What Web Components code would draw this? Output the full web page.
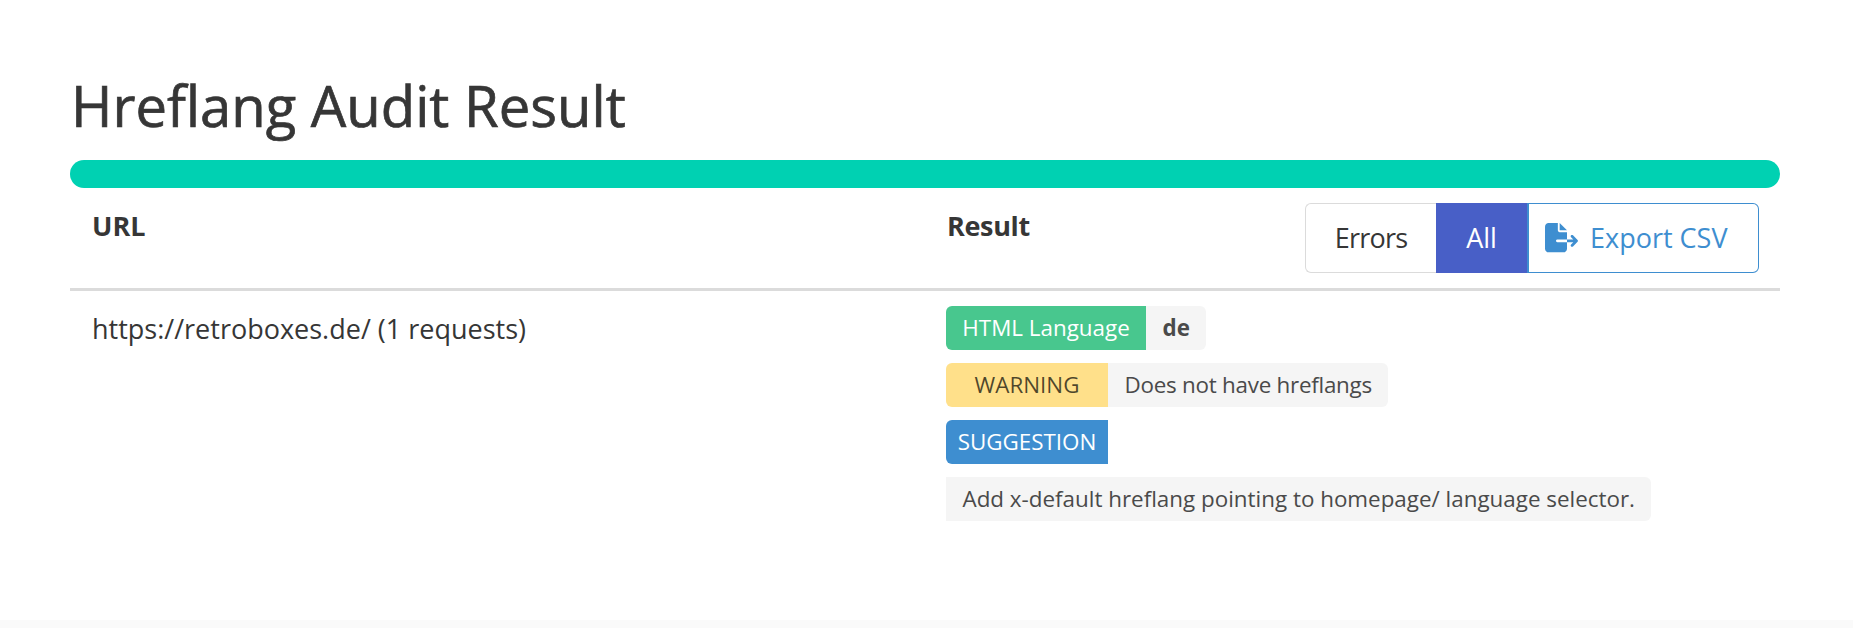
<!DOCTYPE html>
<html><head><meta charset="utf-8"><title>Hreflang Audit Result</title>
<style>
html,body{margin:0;padding:0;background:#fff}
body{font-family:"Open Sans","Noto Sans",sans-serif;color:#4a4a4a}
</style></head><body>
<template id="t-page"><style>
:host{display:block;height:628px;box-sizing:border-box;background:#fff}
main{box-sizing:border-box;height:620px;padding:71px 73px 0 70px}
h1{margin:0 0 21px;font-size:56.2px;line-height:68px;font-weight:400;-webkit-text-stroke:.7px #363636;color:#363636;padding-left:1px;white-space:nowrap}
footer{height:8px;background:#fafafa}
</style><main><h1><slot name="title"></slot></h1><slot></slot></main><footer></footer></template>

<template id="t-progress"><style>
:host{display:block;height:28px;border-radius:14px;background:#00d1b2}
</style></template>

<template id="t-table"><style>
:host{display:block;font-size:27px;color:#363636}
.head{display:grid;grid-template-columns:855px 1fr;height:103px;box-sizing:border-box;border-bottom:3px solid #dbdbdb}
.cell{padding:20px 0 0 22px;font-weight:700;line-height:36px}
.res{display:flex;justify-content:space-between;padding-right:21px}
.res>span{letter-spacing:-.35px}
.body{display:grid;grid-template-columns:855px 1fr}
.url{padding:20px 0 0 22px;line-height:36px}
.results{padding:15px 0 0 21px;display:flex;flex-direction:column;align-items:flex-start;gap:13.5px}
::slotted(btn-group){margin-top:-5px}
</style>
<div class="head"><div class="cell">URL</div><div class="cell res"><span>Result</span><slot name="actions"></slot></div></div>
<div class="body"><div class="url"><slot name="url"></slot></div><div class="results"><slot></slot></div></div></template>

<template id="t-group"><style>
:host{display:flex;height:70px;font-size:27px;font-weight:400;letter-spacing:0}
</style><slot></slot></template>

<template id="t-btn"><style>
:host{display:flex;align-items:center;justify-content:center;gap:12px;box-sizing:border-box;height:70px;border:1px solid #dbdbdb;background:#fff;color:#363636;white-space:nowrap}
:host([kind=first]){width:131px;border-radius:6px 0 0 6px;border-right:0;letter-spacing:-.8px}
:host([kind=active]){width:91px;background:#485fc7;border-color:#485fc7;color:#fff}
:host([kind=export]){width:232px;justify-content:flex-start;padding-left:16px;border:1px solid #3e8ed0;border-left-width:2px;color:#3e8ed0;border-radius:0 6px 6px 0}
</style><slot></slot></template>

<template id="t-tags"><style>
:host{display:inline-flex;height:43.5px;font-size:22.4px;line-height:43px;white-space:nowrap}
.l,.r{display:block;box-sizing:border-box}
.l{border-radius:6px 0 0 6px;text-align:center}
.r{background:#f5f5f5;color:#4a4a4a;border-radius:0 6px 6px 0;padding:0 16.5px}
:host([kind=ok]) .l{background:#48c78e;color:#fff;width:200px}
:host([kind=warn]) .l{background:#ffe08a;color:rgba(0,0,0,.7);width:162px}
:host([kind=warn]) .r{letter-spacing:-.25px}
:host([kind=info]) .l{background:#3e8ed0;color:#fff;width:162px}
:host([kind=info]) .r,:host([kind=plain]) .l{display:none}
:host([strong]) .r{font-weight:700;padding-right:16px}
</style><span class="l"><slot name="label"></slot></span><span class="r"><slot></slot></span></template>

<audit-page>
<span slot="title">Hreflang Audit Result</span>
<audit-progress></audit-progress>
<audit-table>
<btn-group slot="actions">
<audit-btn kind="first">Errors</audit-btn>
<audit-btn kind="active">All</audit-btn>
<audit-btn kind="export"><svg width="33" height="29.3" viewBox="0 0 576 512" aria-hidden="true"><path fill="#3e8ed0" d="M0 64C0 28.7 28.7 0 64 0H224V128c0 17.7 14.3 32 32 32H384V288H216c-13.3 0-24 10.7-24 24s10.7 24 24 24H384V448c0 35.3-28.7 64-64 64H64c-35.3 0-64-28.7-64-64V64zM384 336V288H494.1l-39-39c-9.4-9.4-9.4-24.6 0-33.9s24.6-9.4 33.9 0l80 80c9.4 9.4 9.4 24.6 0 33.9l-80 80c-9.4 9.4-24.6 9.4-33.9 0s-9.4-24.6 0-33.9l39-39H384zm0-208H256V0L384 128z"/></svg>Export CSV</audit-btn>
</btn-group>
<span slot="url">https://retroboxes.de/ (1 requests)</span>
<tag-pair kind="ok" strong><span slot="label">HTML Language</span>de</tag-pair>
<tag-pair kind="warn"><span slot="label">WARNING</span>Does not have hreflangs</tag-pair>
<tag-pair kind="info"><span slot="label">SUGGESTION</span></tag-pair>
<tag-pair kind="plain">Add x-default hreflang pointing to homepage/ language selector.</tag-pair>
</audit-table>
</audit-page>
<script>
const reg=(name,id)=>customElements.define(name,class extends HTMLElement{constructor(){super();this.attachShadow({mode:'open'}).appendChild(document.getElementById(id).content.cloneNode(true));}});
reg('audit-page','t-page');reg('audit-progress','t-progress');reg('audit-table','t-table');reg('btn-group','t-group');reg('audit-btn','t-btn');reg('tag-pair','t-tags');
</script>
</body></html>
